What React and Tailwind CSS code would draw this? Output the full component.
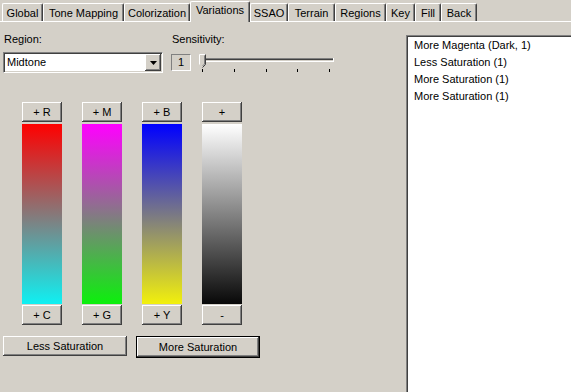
import React from 'react'

const bevel = 'shadow-[inset_-1px_-1px_#404040,inset_1px_1px_#ffffff,inset_-2px_-2px_#808080]'

const tabs = [
    { label: 'Global', w: 'w-[41px]' },
    { label: 'Tone Mapping', w: 'w-[81px]' },
    { label: 'Colorization', w: 'w-[66px]' },
    { label: 'Variations', w: 'w-[60px]', active: true },
    { label: 'SSAO', w: 'w-[38px]' },
    { label: 'Terrain', w: 'w-[47px]' },
    { label: 'Regions', w: 'w-[51px]' },
    { label: 'Key', w: 'w-[29px]' },
    { label: 'Fill', w: 'w-[26px]' },
    { label: 'Back', w: 'w-[36px]' },
]

const columns = [
    { top: '+ R', bottom: '+ C', bar: 'bg-[linear-gradient(to_bottom,#ff0000,#0ff0f2)]' },
    { top: '+ M', bottom: '+ G', bar: 'bg-[linear-gradient(to_bottom,#ff00ff,#0cf00c)]' },
    { top: '+ B', bottom: '+ Y', bar: 'bg-[linear-gradient(to_bottom,#0000ff,#f2f00c)]' },
    { top: '+', bottom: '-', bar: 'bg-[linear-gradient(to_bottom,#ffffff,#080808)]' },
]

const history = ['More Magenta (Dark, 1)', 'Less Saturation (1)', 'More Saturation (1)', 'More Saturation (1)']

function Tab({ label, w, active }) {
    if (active) {
        return (
            <div className={`${w} relative z-10 -mb-px flex h-[21px] items-center justify-center rounded-t-[2px] border-t border-l border-white border-r border-r-[#404040] bg-[#d4d0c8] pb-[3px] shadow-[inset_-1px_0_#808080]`}>
                {label}
            </div>
        )
    }
    return (
        <div className={`${w} flex h-[18px] items-center justify-center rounded-t-[2px] border-t border-l border-white border-r border-r-[#404040] pt-[1px] shadow-[inset_-1px_0_#808080]`}>
            {label}
        </div>
    )
}

function Button({ children, className = '' }) {
    return (
        <div className={`flex h-[20px] items-center justify-center bg-[#d4d0c8] ${bevel} ${className}`}>
            {children}
        </div>
    )
}

function Slider() {
    const ticks = [3, 35, 67, 98, 130]
    return (
        <svg width="136" height="22" viewBox="0 0 136 22" className="ml-[8px] block">
            <line x1="5" y1="6.5" x2="134" y2="6.5" stroke="#808080" />
            <line x1="5" y1="7.5" x2="134" y2="7.5" stroke="#404040" />
            <line x1="5" y1="8.5" x2="134" y2="8.5" stroke="#d4d0c8" />
            <line x1="5" y1="9.5" x2="135" y2="9.5" stroke="#ffffff" />
            <line x1="134.5" y1="6" x2="134.5" y2="10" stroke="#ffffff" />
            <polygon points="0.5,2.5 6.5,2.5 6.5,12.5 3.5,15.5 0.5,12.5" fill="#d4d0c8" />
            <polyline points="0.5,12.5 0.5,2.5 6.5,2.5" fill="none" stroke="#ffffff" />
            <polyline points="6.5,2.5 6.5,12.5 3.5,15.5" fill="none" stroke="#404040" />
            <polyline points="5.5,3.5 5.5,12 3.5,14" fill="none" stroke="#808080" />
            {ticks.map((x) => (
                <rect key={x} x={x} y="17" width="1" height="3" fill="#000" />
            ))}
        </svg>
    )
}

export default function App() {
    return (
        <div className="h-[392px] w-[571px] overflow-hidden bg-[#d4d0c8] font-['Liberation_Sans',Arial,sans-serif] text-[11px] leading-[13px] text-black">
            <div className="flex h-[22px] items-end border-b border-white pl-[2px]">
                {tabs.map((t) => (
                    <Tab key={t.label} {...t} />
                ))}
            </div>

            <div className="flex h-[370px]">
                <div className="w-[406px] px-[3px] pt-[11px]">
                    <div className="flex items-start">
                        <div className="w-[160px]">
                            <div className="pl-[1px]">Region:</div>
                            <div className="mt-[6px] flex h-[21px] items-stretch border border-[#808080] border-r-white border-b-white bg-white py-[1px] pr-[1px] pl-[3px] shadow-[inset_1px_1px_#404040,inset_-1px_-1px_#d4d0c8]">
                                <span className="flex flex-1 items-center">Midtone</span>
                                <div className={`flex w-[16px] items-center justify-center bg-[#d4d0c8] ${bevel}`}>
                                    <svg width="7" height="4" viewBox="0 0 7 4">
                                        <polygon points="0,0 7,0 3.5,4" fill="#000" />
                                    </svg>
                                </div>
                            </div>
                        </div>
                        <div className="ml-[8px]">
                            <div className="pl-[1px]">Sensitivity:</div>
                            <div className="mt-[6px] flex items-start">
                                <div className="mt-[2px] flex h-[17px] w-[20px] items-center justify-center border border-[#808080] border-r-white border-b-white">
                                    1
                                </div>
                                <Slider />
                            </div>
                        </div>
                    </div>

                    <div className="mt-[28px] flex gap-[20px] pl-[19px]">
                        {columns.map((c) => (
                            <div key={c.top} className="flex w-[40px] flex-col">
                                <Button>{c.top}</Button>
                                <div className={`mt-[2px] h-[180px] ${c.bar}`} />
                                <Button className="mt-[1px]">{c.bottom}</Button>
                            </div>
                        ))}
                    </div>

                    <div className="mt-[11px] flex gap-[9px]">
                        <Button className="w-[124px]">Less Saturation</Button>
                        <div className="w-[124px] border border-black">
                            <Button className="h-[18px]">More Saturation</Button>
                        </div>
                    </div>
                </div>

                <div className="flex-1 pt-[13px]">
                    <div className="h-full border-t border-l border-[#808080] bg-white pt-[1px] pl-[7px] leading-[17px] shadow-[inset_1px_1px_#404040]">
                        {history.map((h, i) => (
                            <div key={i}>{h}</div>
                        ))}
                    </div>
                </div>
            </div>
        </div>
    )
}
